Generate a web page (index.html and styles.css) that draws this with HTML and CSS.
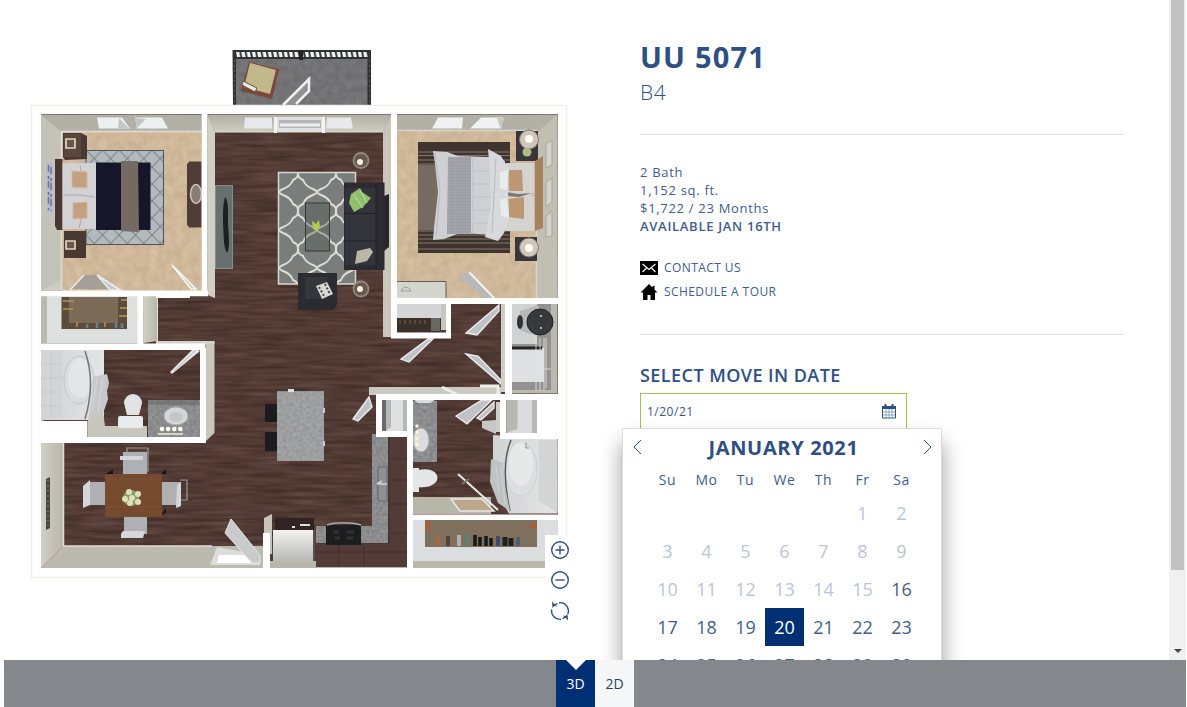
FILE: index.html
```html
<!DOCTYPE html>
<html lang="en">
<head>
<meta charset="utf-8">
<title>UU 5071</title>
<link rel="stylesheet" href="styles.css">
</head>
<body>
<main class="stage">
  <section class="plan">
    <svg class="plan-art" viewBox="0 0 616 660" width="616" height="660">
      <defs>
        <filter id="wood" x="0" y="0" width="100%" height="100%" color-interpolation-filters="sRGB">
          <feTurbulence type="fractalNoise" baseFrequency="0.024 0.27" numOctaves="2" seed="4"/>
          <feColorMatrix values=".19 0 0 0 .225  .17 0 0 0 .145  .16 0 0 0 .125  0 0 0 0 1"/>
        </filter>
        <filter id="carpet" x="0" y="0" width="100%" height="100%" color-interpolation-filters="sRGB">
          <feTurbulence type="fractalNoise" baseFrequency="0.12" numOctaves="2" seed="9"/>
          <feColorMatrix values=".1 0 0 0 .765  .1 0 0 0 .67  .1 0 0 0 .555  0 0 0 0 1"/>
        </filter>
        <filter id="stone" x="0" y="0" width="100%" height="100%" color-interpolation-filters="sRGB">
          <feTurbulence type="fractalNoise" baseFrequency="0.3" numOctaves="2" seed="2"/>
          <feColorMatrix values=".17 0 0 0 .46  .17 0 0 0 .465  .17 0 0 0 .47  0 0 0 0 1"/>
        </filter>
        <filter id="deck" x="0" y="0" width="100%" height="100%" color-interpolation-filters="sRGB">
          <feTurbulence type="fractalNoise" baseFrequency="0.15" numOctaves="2" seed="7"/>
          <feColorMatrix values=".1 0 0 0 .4  .1 0 0 0 .4  .1 0 0 0 .41  0 0 0 0 1"/>
        </filter>
        <linearGradient id="wallV" x1="0" y1="0" x2="0" y2="1"><stop offset="0" stop-color="#b1aea3"/><stop offset="1" stop-color="#cfccc2"/></linearGradient>
        <linearGradient id="wallH"><stop offset="0" stop-color="#d2d0c6"/><stop offset="1" stop-color="#b8b5aa"/></linearGradient>
        <linearGradient id="tubG"><stop offset="0" stop-color="#d0d2d3"/><stop offset="1" stop-color="#e4e5e5"/></linearGradient>
        <linearGradient id="applG" x1="0" y1="0" x2="0" y2="1"><stop offset="0" stop-color="#f3f3f3"/><stop offset="1" stop-color="#b9b9b6"/></linearGradient>
        <pattern id="lattice" width="16.5" height="17" patternUnits="userSpaceOnUse" x="86" y="150"><rect width="17" height="17" fill="#b4b9bb"/><path d="M0 0L16.5 17M16.5 0L0 17" stroke="#7b848a" stroke-width="1"/></pattern>
        <pattern id="trellis" width="38" height="38" patternUnits="userSpaceOnUse" x="279" y="173">
          <rect width="38" height="38" fill="#7a7d7b"/>
          <path d="M19 0C19 4 20 5 24 7C26 12 31 15 34 16C36 17 38 18 38 19C38 20 36 21 34 22C31 23 26 26 24 31C20 33 19 34 19 38C19 34 18 33 14 31C12 26 7 23 4 22C2 21 0 20 0 19C0 18 2 17 4 16C7 15 12 12 14 7C18 5 19 4 19 0" fill="none" stroke="#dddcd5" stroke-width="2"/>
        </pattern>
        <pattern id="check" width="3" height="3" patternUnits="userSpaceOnUse"><rect width="3" height="3" fill="#a3a4ac"/><path d="M0 0h3M0 0v3" stroke="#90929c" stroke-width=".7"/></pattern>
        <pattern id="rail" width="5.3" height="6" patternUnits="userSpaceOnUse" x="236" y="52"><path d="M0 0h3.300l1 5H1z" fill="#f5f5f5"/></pattern>
      </defs>

      <!-- balcony -->
      <rect x="235" y="54" width="134" height="52" filter="url(#deck)"/>
      <path d="M232.500 50h138.500v56h-3.500V59H236v47h-3z" fill="#303135"/>
      <rect x="236" y="52" width="132" height="5" fill="url(#rail)"/>
      <path d="M234.500 60v45M369.500 60v45" stroke="#55565a" stroke-dasharray="2 3"/>
      <path d="M301 50v10" stroke="#222" stroke-width="4"/>
      <path d="M249 62l30 7-7 30-31-8z" fill="#7d4639"/><path d="M250 63l26 7-6 24-26-7z" fill="#c3b88c"/>
      <path d="M243 81l14 7-2 4-13-7z" fill="#eee9df" stroke="#645247"/>
      <path d="M283 105l26-26v12l-13 13" fill="#909193" stroke="#f0f0f0" stroke-width="2.500"/>

      <!-- shell and wood floor -->
      <rect x="31.500" y="105.500" width="535" height="472" fill="#fff" stroke="#efefeb" stroke-width="1.500"/>
      <rect x="41" y="114.500" width="517" height="453.500" filter="url(#wood)"/>

      <!-- bedroom one -->
      <rect x="41" y="114.500" width="161" height="176" fill="url(#wallV)"/>
      <path d="M41 114.500l21 18V280l-21 10.500z" fill="#c5c3b8"/>
      <rect x="62" y="132" width="140" height="158.500" filter="url(#carpet)"/>
      <path d="M61.500 290V131.500H202" fill="none" stroke="#deddd5" stroke-width="1.500"/>
      <path d="M97 117.500h25l8 11H99zM135 117.500h27l6 11h-31z" fill="#edf0f1"/><path d="M119 118l10 10.500h-11zM135 118l2 10 9-9z" fill="#c4c6c5"/>
      <rect x="86" y="150.500" width="77.500" height="94" fill="url(#lattice)" stroke="#4c5660"/>
      <path d="M46 161l7 3v53l-6-6z" fill="#b9bdcb"/><path d="M48.500 165v45M51 167v44" stroke="#6572a2" stroke-width="1.500" stroke-dasharray="7 4 3 2"/>
      <path d="M63 133h18l6 3v23l-22 1-2-3zM64 231h22v27H64z" fill="#4a3832"/><path d="M64 134h17v23H64z" fill="#5b463e"/>
      <path d="M66 139h9v9h-9zM66 241h9v8h-9z" fill="#67564a" stroke="#e3d4bf" stroke-width="1.700"/>
      <path d="M55 159h7.500v71H57l-2-4z" fill="#483831"/>
      <rect x="62.500" y="163" width="35" height="66" fill="#d2d2d5"/><path d="M63 195h17l15 2M80 165l3 15M79 228l4-15" stroke="#aaaab2" fill="none"/>
      <path d="M72 171l15 1v16l-15-1zM73 203l14-1v16l-14 1z" fill="#c49f80" stroke="#d8b698"/>
      <path d="M96 162.500h54.500V230H96z" fill="#15162a"/><path d="M121 161h17l1 71-18-1z" fill="#756a62"/>
      <path d="M189 161.500h12.500v66H189l-2-3v-60z" fill="#503d36"/><ellipse cx="196" cy="194" rx="5.500" ry="9.500" fill="#8a7c74" stroke="#c8c4c0" stroke-width="1.500"/>
      <path d="M84 275h14l11 14H72z" fill="#a49f97"/><path d="M70 290l14-15M97 275l13 15h10z" fill="#c5c6c9" stroke="#ecedef" stroke-width="1.500"/><path d="M172 265l24 24h-5z" fill="#ccc" stroke="#f6f6f6" stroke-width="1.500"/>

      <!-- living room walls -->
      <path d="M207.500 114.500H391l-8 17.500H215z" fill="url(#wallV)"/><path d="M207.500 114.500l7.500 17V298l-7.500-3z" fill="#d1cfc4"/><path d="M391 114.500l-8 17V337h8z" fill="#c8c6ba"/><path d="M215 132h168" stroke="#dedcd4"/>
      <path d="M245 117.500h27v11h-28zM327 117.500h24l2 11h-27z" fill="#e7e9ea"/><rect x="274" y="117" width="51" height="15" fill="#dfe0e1"/><rect x="279" y="120" width="42" height="8" fill="#b5b7ba"/><path d="M280 125h40" stroke="#eee" stroke-width="3"/><path d="M274 117h3v16h-3zM322 117h3v16h-3z" fill="#f5f5f2"/>
      <!-- media console -->
      <rect x="215.500" y="185.500" width="17" height="83" fill="#67706e" stroke="#858e8a"/><path d="M225 197c4 5 3 15 3 27 1 15 2 24-1 29-4-7-3-19-4-29 0-13 0-20 2-27z" fill="#1b2021"/>
      <!-- seating -->
      <rect x="278.500" y="172.500" width="77" height="111.500" fill="url(#trellis)" stroke="#d8d7cf" stroke-width="1.500"/>
      <rect x="305.500" y="203" width="24" height="48" fill="#47534a" fill-opacity=".35" stroke="#323a36"/><path d="M312 221l4 3 3-4 1 7-3 4-4-2z" fill="#b3ce49"/>
      <path d="M384 196l5-2v53l-5 4z" fill="#26262a"/><path d="M344 182.500h40.500V270H344z" fill="#2b2b31"/><path d="M345 188h31v77h-31z" fill="#34353c"/><path d="M345 213.500h31M345 241h31M376 184v85" stroke="#202126"/>
      <path d="M351 194l9-6 2 4 9 6-8 9-9 5-5-9z" fill="#91bf6b"/><path d="M354 195l9 13M360 190l7 13" stroke="#bedea2"/><path d="M357 251l13-3 3 4-6 9-12 3z" fill="#bab7a6"/>
      <path d="M298 273h39v32l-3 5h-36z" fill="#2b2c31"/><path d="M305 277h22v22h-22z" fill="#36373d"/><path d="M316 286l11-4 6 12-11 5z" fill="#d9d8d5"/><path d="M319 287l5 9M325 284l5 10" stroke="#444448" stroke-dasharray="2 2" stroke-width="2"/>
      <g fill="#66574f" stroke="#94877d" stroke-width="1.800"><circle cx="361" cy="160.500" r="7.500"/><circle cx="361" cy="289" r="7.500"/></g><g fill="#fff2dc"><circle cx="360" cy="162" r="3"/><circle cx="360" cy="289" r="3"/></g>

      <!-- bedroom two -->
      <rect x="397" y="114.500" width="160.500" height="183.500" fill="url(#wallV)"/><path d="M557.500 114.500L537 132v166h20.500z" fill="#c1beb2"/>
      <rect x="397" y="131" width="139" height="167" filter="url(#carpet)"/><path d="M397 130.500h139.500V298" fill="none" stroke="#d8d7cf" stroke-width="1.500"/>
      <path d="M438 117.500h25l-1 11h-30zM481 117.500h22l-2 11h-31z" fill="#eff1f2"/><path d="M497 118h8l-5 10z" fill="#cbc8bf"/>
      <rect x="418" y="142" width="92" height="111" fill="#3f342f"/><path d="M418 152h92M418 155.500h92M418 160h92M418 164h92M418 231h92M418 235h92M418 239h92M418 243h92M418 249h92" stroke="#85776b" stroke-width="1.100"/><rect x="418" y="165" width="92" height="65" fill="#766a61"/>
      <path d="M516 131h22v30h-22zM515 237h22v24h-22z" fill="#38363a"/>
      <path d="M535 161l8-5v72l-8 3z" fill="#a5825f"/><path d="M506 163h28v29l-3 3 3 2v34h-29z" fill="#d5d3d0"/>
      <path d="M508 170h14l1 21h-14zM508 199l16-2v22l-15-2z" fill="#bd9673"/><path d="M506 192l12 2 14-1-13 4-13-1z" fill="#7c7876"/>
      <path d="M433 151l14 1 11 4 30 1 17 4v64l-10 10-35-2-16 6-11 1 1-12 4-36-3-28z" fill="#cfd0d3"/><path d="M448 157h23v77h-24z" fill="url(#check)"/><path d="M473 158v75M474 171h20M474 184h20M474 197h20M474 210h20M474 223h20" stroke="#b6b8be" stroke-width=".7"/>
      <path d="M488 149l13 7 8 13-1 21 1 29-5 14-6 8-13-4 6-31-1-32z" fill="#d8d9da"/><path d="M500 172l8-2-1 20-7-2zM500 200l7-2 2 20-8-2z" fill="#e9ecef"/><path d="M435 153l5 37-4 46M496 158l-4 75" fill="none" stroke="#b9bac0"/>
      <circle cx="529" cy="139.500" r="9.500" fill="#cfc6b9" stroke="#81766e"/><circle cx="529" cy="139" r="4" fill="#fffdf4"/><circle cx="527" cy="152" r="4.500" fill="#aeb88b"/><circle cx="529" cy="247.500" r="9.500" fill="#cfc6b9" stroke="#81766e"/><circle cx="529" cy="248" r="4" fill="#fffdf4"/>
      <path d="M546 143l6-2v24l-6 3zM546 182l6-4v24l-6 5zM546 216l6-5v25l-6 1z" fill="#d2d2cf" stroke="#aaa79f"/>
      <path d="M397 282h49v16h-49z" fill="#d4d4ce"/><path d="M397 281.500h49V298" fill="none" stroke="#665f57"/><path d="M401 291c2-5 8-5 10 0z" fill="none" stroke="#999"/><path d="M458 276l12-4 22 26h-8z" fill="#b6b8bc"/><path d="M469 272l25 26" stroke="#f2f2f2" stroke-width="2"/>

      <!-- closet one -->
      <rect x="41" y="296" width="97" height="47.500" fill="#dedfdf"/><path d="M41 296h6v47h-6z" fill="#bbb9ae"/><rect x="61.500" y="297" width="65.500" height="32" fill="#5b4c3d"/><rect x="69" y="297" width="49" height="26" fill="#7b6b57"/>
      <path d="M63 301h11M63 309h10M121 300h6M120 308h7M119 316h8M77 327v-5M105 327v-5" stroke="#b89455" stroke-width="1.500"/><path d="M87 328v-4M97 328v-6M116 328v-5M122 328v-5" stroke="#65828a" stroke-width="2.500"/>
      <path d="M143.500 296h14v45l-14 2z" fill="url(#wallH)"/><path d="M157.500 296v45" stroke="#e0dfd8"/>

      <!-- bathroom one -->
      <path d="M41 350h63v70H41z" fill="url(#tubG)"/><path d="M41 350h21v66l-21 5z" fill="#d2d4d5"/><path d="M41 364h20M41 378h20M41 392h20M41 406h20M51 350v67" stroke="#c2c5c7" stroke-width=".6"/><ellipse cx="79" cy="380" rx="15" ry="24" fill="#d9dbdc" stroke="#c4c7c9"/><ellipse cx="80" cy="378" rx="12" ry="20" fill="#e4e5e6"/>
      <path d="M85 351c8 23 7 45 0 68" fill="none" stroke="#707274" stroke-width="1.500"/><path d="M93 377l14-3 2 9-2 8 1 8-3 9-3 7-14 5 4-22z" fill="#c5c7c8"/>
      <path d="M97 379l-5 34M103 377l-5 35" stroke="#d6d8d9"/><path d="M88 420l15-8 2 14h42v11H88z" fill="#c9c7bd"/>
      <path d="M124 403a9 9 0 0 1 18 0l-3 12h-12z" fill="#e2e3e4"/><rect x="118" y="416" width="25" height="12" rx="2" fill="#e9eaea"/>
      <path d="M148 400h51.500v37H148z" filter="url(#stone)"/><path d="M148 400h51v5h-51z" fill="#606264" fill-opacity=".5"/><ellipse cx="176" cy="416" rx="12" ry="9" fill="#d5d6d7" stroke="#a9abac"/><ellipse cx="176" cy="417" rx="7" ry="5" fill="#c4c5c7"/><path d="M162 429h21" stroke="#fffbe8" stroke-width="4.500" stroke-linecap="round" stroke-dasharray=".1 6"/><path d="M158 434h25" stroke="#d8d3c6" stroke-width="2"/>
      <path d="M170 372l24-24 6 3-28 23z" fill="#e5e6e7"/><path d="M174 371l22-21" stroke="#b5b6b9"/>
      <path d="M206 341h8.500v92l-8.500 8z" fill="#c9c6bb"/><path d="M156 341h58.500v3H156z" fill="#d4d2c8"/>

      <!-- dining -->
      <path d="M41 443h22.500v103L41 568z" fill="url(#wallH)"/><path d="M63.500 546H263v22H41z" fill="#bcb9ae"/><path d="M63.500 443v103H212" fill="none" stroke="#e0ded5" stroke-width="1.500"/><path d="M46 479l4-2v51l-4 2z" fill="#4a4642"/><path d="M48 480v46" stroke="#87817a" stroke-dasharray="2 3"/>
      <g fill="#afb0b4"><path d="M123 452h24v23h-24zM90 482h16v23H84zM161 482h20v23h-20zM124 516h23v18h-23z"/></g><g fill="#d5d6d8"><path d="M120 456h23v4h-23zM83 486l7-6v25l-7 3zM177 485l4-3v24l-5 2zM121 534l2-3h22l-2 7h-22z"/></g><path d="M127 452v-4h21v24M180 480h7v20h-6" fill="none" stroke="#9b9a9c" stroke-width="1.200"/>
      <path d="M105 474l8-4v4M161 474l5-5v5M161 516l5-4v-4" fill="#171313"/><rect x="105" y="474" width="57" height="43" fill="#764a2e"/><path d="M105 479h57M105 486h57M105 497h57M105 507h57" stroke="#815336" stroke-width=".7"/>
      <circle cx="131" cy="498" r="8" fill="#8a9c66"/><g fill="#dfe1bd"><circle cx="129" cy="492" r="3"/><circle cx="138" cy="494" r="3"/><circle cx="125" cy="499" r="3"/><circle cx="132" cy="498" r="3"/><circle cx="130" cy="503" r="3"/><circle cx="138" cy="502" r="3"/></g>
      <path d="M217 547l43 8v10h-50z" fill="#dcdcda"/><path d="M219 555h38v8h-40z" fill="#fff"/><path d="M231 519l29 36v8h-8l-27-30z" fill="#c8cacc" stroke="#e6e6e6"/>
      <path d="M264 518l8-4v40h-8z" fill="#c7c5bb"/>

      <!-- kitchen -->
      <rect x="270" y="561" width="137" height="7" fill="#b8b5a9"/><path d="M275 518h39v17h-39z" fill="#302321"/><path d="M292 527h3M300 525h10" stroke="#ddd" stroke-width="2"/><rect x="273" y="530" width="42" height="31" fill="url(#applG)"/><path d="M314 530v31" stroke="#55514e" stroke-width="2"/>
      <path d="M388 437h19v130h-91v-24h72z" fill="#533c37"/><path d="M316 543h73V437M316 552h90M391 459h16M391 480h16M391 504h16M391 533h16M339 544v23M364 544v23" fill="none" stroke="#432e2a"/>
      <rect x="372" y="434" width="16" height="109" filter="url(#stone)"/><rect x="316" y="526" width="72" height="17" filter="url(#stone)"/><rect x="326" y="525" width="35" height="20" fill="#1b1d1e"/><path d="M327 525c8-3 25-3 34 0" stroke="#aaa" stroke-width="1.500" fill="none"/><path d="M333 532h6M347 532h7M335 538h5M347 538h6" stroke="#303335" stroke-width="3"/>
      <path d="M378 467h9v34h-9z" fill="#8c9194" stroke="#62676a"/><path d="M378 484h9M377 484l5-3" stroke="#d5d5d5" stroke-width="1.500"/>
      <rect x="277" y="391.500" width="47" height="69.500" filter="url(#stone)"/><path d="M277 391.500h47V461h-47z" fill="#fff" fill-opacity=".16"/><path d="M265 404h12v18h-12zM265 432h12v19h-12z" fill="#1c1c1e"/><path d="M288 389h6v3h-6z" fill="#ddd"/><path d="M324 408v5M324 441v5" stroke="#ccc" stroke-width="2"/>

      <!-- hall closets -->
      <rect x="397" y="304" width="43" height="28" fill="#3b3029"/><path d="M397 304h46v14h-46z" fill="#d4d5d6"/><path d="M431 318h9v13h-9z" fill="#686765"/><path d="M399 322h29" stroke="#5b4938" stroke-width="4" stroke-dasharray="2 3"/><path d="M441 304h5v26h-5z" fill="#c8c6bc"/>
      <path d="M369 387h132v8H369z" fill="#cccac0"/><path d="M442 387l16 8M480 386h18v8" stroke="#eeeee9" stroke-width="3" fill="none"/>
      <g fill="#c0c2c5" stroke="#ecedee" stroke-width="1.300"><path d="M401 359l27-20h5l-24 23zM466 333l33-28v6l-22 24zM466 354l12 2 23 24v4zM353 419l16-22 3 10-14 14zM456 416l26-16h10l-25 24zM477 418l17-16v6l-13 12z"/></g>
      <!-- laundry -->
      <rect x="512" y="304" width="45.500" height="89.500" fill="#bbb9ae"/><path d="M512 304h39v86h-39z" fill="#92928f"/><path d="M512 304h25v40h-25z" fill="#d1d2d2"/><path d="M512 348h32v34h-32z" fill="#dfe0e1"/><path d="M512 348h30" stroke="#242426" stroke-width="3"/><path d="M520 311l18-6 12 25-20 4-10-4z" fill="#b7b8ba"/><ellipse cx="520" cy="322" rx="3" ry="7" fill="#303134"/><circle cx="540" cy="322" r="13" fill="#37393c" stroke="#1d1e20"/><circle cx="541" cy="316" r="1" fill="#ddd"/><circle cx="541" cy="328" r="1" fill="#ddd"/><path d="M536 338v53M540 338v53M544 338v53M533 369h18M546 338v50" stroke="#e4e4e3" stroke-width=".8"/>

      <!-- bathroom two -->
      <rect x="413" y="401" width="23.500" height="61" filter="url(#stone)"/><path d="M414 400h21l-5 3h-12z" fill="#ddd"/><ellipse cx="421" cy="440" rx="8" ry="12" fill="#dbdcdd" stroke="#a6a8aa"/><path d="M417 426v20" stroke="#fff1d3" stroke-width="3.500" stroke-linecap="round" stroke-dasharray=".1 6"/>
      <path d="M413 468h6v24h-6zM418 470c26-5 26 20 0 17z" fill="#e5e6e7"/><path d="M413 497h78v17h-78z" fill="#b8b5a9"/><path d="M451 499h31l12 12h-34z" fill="#bba78c" stroke="#e8e8e5" stroke-width="1.500"/><path d="M458 474l40 36" stroke="#e9e9e9" stroke-width="2"/><path d="M462 484l7-5" stroke="#777" stroke-width="2"/>
      <path d="M493 435l64.500 4v74.500H509l-16-27z" fill="url(#tubG)"/><path d="M539 440h18.500v73l-18.500-12z" fill="#d3d5d5"/><ellipse cx="521" cy="469" rx="16" ry="27" fill="#dcdfe0" stroke="#ced0d1"/><ellipse cx="521" cy="464" rx="12" ry="22" fill="#e7e8e8"/><path d="M511 440c-9 21-6 48-1 71" fill="none" stroke="#55585b" stroke-width="1.500"/><path d="M491 459l12 4 2 24 5 24-12-8-8-21z" fill="#bec2c3"/><path d="M496 465l3 29M501 467l4 38" stroke="#d0d3d3"/><path d="M526 443v5h3" fill="none" stroke="#888"/>
      <path d="M482 421l14-1v14l-14-6z" fill="#c6c7c4"/>
      <!-- closet two -->
      <rect x="413" y="520" width="145" height="48" fill="#dcdddf"/><path d="M413 561h145v7H413z" fill="#bcb9ac"/><rect x="425" y="520" width="112" height="27" fill="#7e705d"/><path d="M425 521h7l-3 5 3 3-7 1zM525 526l12-4v7z" fill="#a35f3c"/>
      <path d="M428 546v-12" stroke="#76725b" stroke-width="4"/><path d="M438 546v-10" stroke="#a96845" stroke-width="5"/><path d="M448 546v-10" stroke="#554335" stroke-width="4"/><path d="M459 546v-11" stroke="#aeb2af" stroke-width="4"/><path d="M467 546v-12" stroke="#617e6e" stroke-width="5"/><path d="M475 546v-11M480 546v-9M486 546v-10M491 546v-8" stroke="#171719" stroke-width="3.500"/><path d="M498 546v-10" stroke="#3b4e72" stroke-width="4"/><path d="M505 546v-9M511 546v-8" stroke="#1c221d" stroke-width="5"/><path d="M518 546v-9" stroke="#515b75" stroke-width="4"/>

      <!-- wall tops -->
      <g fill="#fff">
        <path d="M201.700 112h5.800v184h-5.800zM391 112h6v192h-6zM38 290.500h170v5.700H38zM156 296h34v2h-34z"/>
        <path d="M137.500 294h6v50h-6zM41 343.500h164.500v6.500H41zM200 348h6v94h-6zM38 421h49.500v22H38zM80 437h126v6H80z"/>
        <path d="M263 533h7v35h-7zM391 298h169v6H391zM391 303h6v35h-6zM391 332.500h60v6h-60zM446 302h5v35h-5zM505 303h7v96h-7zM376 394h183v6H376z"/>
        <path d="M376 394h6v43h-6zM376 431h37v6h-37zM407 400h6v168h-6zM500 399h6v40h-6zM500 433h58v6h-58zM537 399h21v40h-21zM408 514.500h151v5.500H408z"/>
      </g>
      <rect x="382" y="400" width="25" height="31" fill="#dddfe0"/><path d="M382 400h4v31h-4z" fill="#686a6c"/><path d="M386 400h5v27l-5 4zM403 400h4v31h-4z" fill="#b5b8b9"/><rect x="506.500" y="400" width="30.500" height="33" fill="#d9dbdd"/><path d="M506.500 400h11v29l-11 4zM532 400h5v33h-5z" fill="#b7b8b4"/><path d="M496 402h4v30h-4zM501 304h4v88h-4z" fill="#cfcec6"/>
    </svg>
    <div class="zoom-tools">
      <svg viewBox="0 0 20 20"><circle cx="10" cy="10" r="8.300"/><path d="M10 5.500v9M5.500 10h9"/></svg>
      <svg viewBox="0 0 20 20"><circle cx="10" cy="10" r="8.300"/><path d="M5.500 10h9"/></svg>
      <svg viewBox="0 0 20 20"><path d="M9 1.700A8.300 8.300 0 0 1 17.800 13M4.500 4.500L7.300 2.200M11 18.300A8.300 8.300 0 0 1 1.700 8.500M15.500 15.500l-2.800 2.300"/><path class="solid" d="M2 .8l.5 6.200 1.800-2L7 5.500zM18 19.200l-.5-6.200-1.800 2-2.900-.5z"/></svg>
    </div>
  </section>

  <section class="details">
    <h1>UU 5071</h1>
    <p class="model">B4</p>
    <div class="facts">
      <p>2 Bath</p><p>1,152 sq. ft.</p><p>$1,722 / 23 Months</p><p class="available">AVAILABLE JAN 16TH</p>
      <a class="action"><svg viewBox="0 0 18 14"><path d="M0 0h18v14H0z"/><path d="M2.500 3L9 8.500 15.500 3M2.500 11l4-4M15.500 11l-4-4" fill="none" stroke="#fff" stroke-width="1.100"/></svg><span>CONTACT US</span></a>
      <a class="action tour"><svg viewBox="0 0 18 16"><path d="M9 0L.5 8.500H3V16h4.500v-5h3v5H15V8.500h2.500L14.500 5.500V2h-2v1.500z"/></svg><span>SCHEDULE A TOUR</span></a>
    </div>
    <h2>SELECT MOVE IN DATE</h2>
    <div class="date-field"><span>1/20/21</span>
      <svg viewBox="0 0 14 15"><path d="M.5 2.500h13v11.500H.5z" fill="#fff" stroke="#2d4f83"/><path d="M0 2h14v3H0zM2.500 0h2v3h-2zM9.500 0h2v3h-2z" fill="#2d4f83"/><path d="M4 5v9M7 5v9M10 5v9M1 8h12M1 11h12" stroke="#8b9dbb" stroke-width=".9"/></svg>
    </div>
    <div class="calendar">
      <div class="cal-head">
        <svg viewBox="0 0 9 16"><path d="M8 1L1 8l7 7"/></svg><strong>JANUARY 2021</strong><svg viewBox="0 0 9 16"><path d="M1 1l7 7-7 7"/></svg>
      </div>
      <div class="week"><span>Su</span><span>Mo</span><span>Tu</span><span>We</span><span>Th</span><span>Fr</span><span>Sa</span></div>
      <div class="days">
        <span class="off first">1</span><span class="off">2</span>
        <span class="off">3</span><span class="off">4</span><span class="off">5</span><span class="off">6</span><span class="off">7</span><span class="off">8</span><span class="off">9</span>
        <span class="off">10</span><span class="off">11</span><span class="off">12</span><span class="off">13</span><span class="off">14</span><span class="off">15</span><span>16</span>
        <span>17</span><span>18</span><span>19</span><span class="picked">20</span><span>21</span><span>22</span><span>23</span>
        <span>24</span><span>25</span><span>26</span><span>27</span><span>28</span><span>29</span><span>30</span>
      </div>
    </div>
  </section>
  <div class="scrollbar"><div class="thumb"></div><svg viewBox="0 0 8 4"><path d="M0 0h8L4 4z"/></svg></div>
</main>
<footer class="views"><button class="view active">3D</button><button class="view">2D</button></footer>
</body>
</html>
```
FILE: styles.css
```css
* { box-sizing: border-box; margin: 0; padding: 0; }
body { width: 1187px; height: 707px; overflow: hidden; background: #fff; color: #2d4f83; font-family: "Open Sans", sans-serif; }
.stage { display: flex; height: 660px; overflow: hidden; }
.plan { position: relative; width: 640px; flex: none; }
.plan-art { display: block; }
.zoom-tools { position: absolute; left: 545px; top: 535px; width: 30px; height: 92px; padding-top: 5px; background: #fff; display: flex; flex-direction: column; align-items: center; gap: 10px; }
.zoom-tools svg { width: 20px; height: 20px; fill: none; stroke: #2f4e82; stroke-width: 1.4; }
.zoom-tools svg:last-child { margin-top: 1px; }
.zoom-tools .solid { fill: #2f4e82; stroke: none; }
.details { position: relative; width: 529px; flex: none; padding: 37px 45px 0 0; }
h1 { font-size: 29px; line-height: 40px; letter-spacing: 1.2px; font-weight: 700; }
.model { font-size: 21px; line-height: 30px; font-weight: 300; letter-spacing: .5px; }
.facts { margin-top: 27px; height: 201px; padding-top: 28px; border: solid #dedfde; border-width: 1px 0; color: #415d8c; font-size: 13px; line-height: 18px; letter-spacing: .7px; }
.available { font-weight: 600; }
.action { display: flex; align-items: center; gap: 6px; height: 24px; margin-top: 21px; font-size: 12px; letter-spacing: .43px; }
.action svg { width: 18px; height: 14px; fill: #000; }
.tour { margin-top: 0; }
.tour svg { height: 16px; }
h2 { margin-top: 27px; font-size: 18px; line-height: 26px; font-weight: 600; letter-spacing: .45px; }
.date-field { display: flex; justify-content: space-between; width: 267px; height: 38px; margin-top: 5px; padding: 0 10px 2px 6px; border: 1px solid #9fc54d; align-items: center; color: #3a5682; font-size: 12px; letter-spacing: .5px; }
.date-field svg { width: 14px; height: 15px; }
.calendar { position: absolute; left: -18px; top: 428px; width: 320px; height: 290px; background: #fff; border: 1px solid #dcdcdc; box-shadow: 0 15px 20px rgba(0,0,0,.4); }
.cal-head { display: flex; align-items: center; justify-content: space-between; height: 38px; padding: 0 9px 2px 10px; }
.cal-head strong { font-size: 20px; letter-spacing: .65px; margin-left: 2px; }
.cal-head svg { width: 9px; height: 16px; fill: none; stroke: #2d4f83; stroke-width: 1; }
.week, .days { display: grid; grid-template-columns: repeat(7, 39px); margin-left: 25px; text-align: center; color: #435e8b; }
.week { height: 27px; line-height: 26px; font-size: 14px; letter-spacing: .5px; }
.days { grid-auto-rows: 38px; line-height: 38px; font-size: 18px; }
.first { grid-column: 6; }
.days .off { color: #bcc6d5; }
.days .picked { background: #002f74; color: #fff; }
.scrollbar { width: 17px; height: 660px; padding: 0 2px; background: #f0f0f0; display: flex; flex-direction: column; align-items: center; justify-content: space-between; }
.thumb { width: 13px; height: 570px; background: #c1c1c1; }
.scrollbar svg { width: 8px; height: 4px; margin-bottom: 7px; fill: #444; }
.views { display: flex; justify-content: center; height: 47px; width: 1182px; margin-left: 4px; background: #84888c; }
.view { width: 39px; height: 47px; border: 0; background: #f5f6f7; color: #2d3f5c; font: 14px/47px "Open Sans", sans-serif; }
.active { position: relative; background: #002f74; color: #fff; }
.active::before { content: ""; position: absolute; left: 10px; top: 0; border: solid transparent; border-width: 10px 10px 0; border-top-color: #fff; }
```
